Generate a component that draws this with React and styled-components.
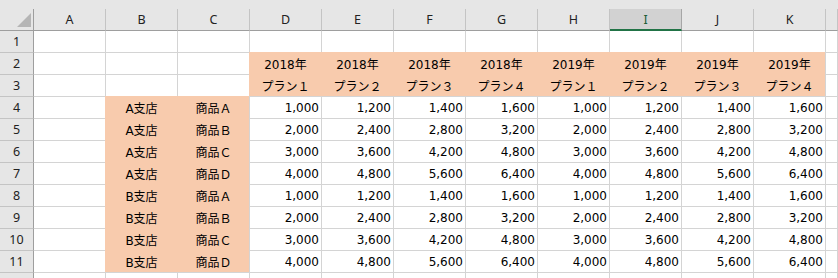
import React from "react";
import styled, { createGlobalStyle } from "styled-components";

const COLS = ["A", "B", "C", "D", "E", "F", "G", "H", "I", "J", "K", ""];
const SELECTED = "I";
const ROWS = 12;
const VISIBLE_ROWS = 11;

const plans = [
  ...[1, 2, 3, 4].map((p) => ({ year: "2018年", plan: "プラン" + String.fromCharCode(0xff10 + p), p })),
  ...[1, 2, 3, 4].map((p) => ({ year: "2019年", plan: "プラン" + String.fromCharCode(0xff10 + p), p })),
];

const items = [];
["A支店", "B支店"].forEach((shop) => {
  ["Ａ", "Ｂ", "Ｃ", "Ｄ"].forEach((name, i) => {
    items.push({ shop, product: "商品" + name, k: i + 1 });
  });
});

const fmt = (n) => n.toLocaleString("en-US");

// row -> cells for columns A..K
const buildRow = (r) => {
  const cells = Array(11).fill(null);
  if (r === 2 || r === 3) {
    plans.forEach((pl, i) => {
      cells[3 + i] = { text: r === 2 ? pl.year : pl.plan, fill: true, align: "center" };
    });
  }
  if (r >= 4 && r <= 11) {
    const it = items[r - 4];
    cells[1] = { text: it.shop, fill: true, align: "center" };
    cells[2] = { text: it.product, fill: true, align: "center" };
    plans.forEach((pl, i) => {
      cells[3 + i] = { text: fmt(it.k * (1000 + 200 * (pl.p - 1))), align: "right" };
    });
  }
  return cells;
};

const App = () => {
  return (
    <>
      <GlobalStyle />
      <Sheet>
        <TopStrip />
        <Grid>
          <Corner>
            <CornerMark />
          </Corner>
          {COLS.map((c, i) => (
            <ColHeader key={"h" + i} $selected={c === SELECTED}>
              {c}
            </ColHeader>
          ))}
          {Array.from({ length: ROWS }, (_, idx) => {
            const r = idx + 1;
            const cells = buildRow(r);
            return (
              <React.Fragment key={r}>
                <RowHeader>{r <= VISIBLE_ROWS ? r : ""}</RowHeader>
                {cells.map((cell, ci) => (
                  <Cell
                    key={ci}
                    $fill={cell && cell.fill}
                    $align={cell ? cell.align : "left"}
                  >
                    {cell ? cell.text : ""}
                  </Cell>
                ))}
                <Cell />
              </React.Fragment>
            );
          })}
        </Grid>
      </Sheet>
    </>
  );
};

const GlobalStyle = createGlobalStyle`
  html, body {
    margin: 0;
    padding: 0;
    background: #ffffff;
    overflow: hidden;
  }
  body {
    font-family: "DejaVu Sans", "Noto Sans CJK JP", sans-serif;
  }
`;

const Sheet = styled.div`
  width: 838px;
  height: 278px;
  overflow: hidden;
  background: #ffffff;
`;

const TopStrip = styled.div`
  height: 9px;
  background: #e6e6e6;
`;

const Grid = styled.div`
  display: grid;
  grid-template-columns: 34px repeat(11, 72px) 1fr;
  grid-auto-rows: 22px;
`;

const Corner = styled.div`
  box-sizing: border-box;
  background: #e6e6e6;
  border-right: 1px solid #9e9e9e;
  border-bottom: 1px solid #9e9e9e;
  display: flex;
  align-items: flex-end;
  justify-content: flex-end;
  padding: 0 2px 3px 0;
`;

const CornerMark = styled.div`
  width: 14px;
  height: 14px;
  background: #b5b5b5;
  clip-path: polygon(100% 0, 100% 100%, 0 100%);
`;

const ColHeader = styled.div`
  box-sizing: border-box;
  background: ${({ $selected }) => ($selected ? "#d2d2d2" : "#e6e6e6")};
  border-right: 1px solid ${({ $selected }) => ($selected ? "#a6a6a6" : "#c4c4c4")};
  border-bottom: ${({ $selected }) => ($selected ? "2px solid #217346" : "1px solid #9e9e9e")};
  color: ${({ $selected }) => ($selected ? "#1d5c38" : "#222222")};
  font-family: "Noto Sans", "DejaVu Sans", sans-serif;
  font-size: 12.5px;
  display: flex;
  align-items: center;
  justify-content: center;
  padding-top: ${({ $selected }) => ($selected ? "1px" : "0")};
`;

const RowHeader = styled.div`
  box-sizing: border-box;
  background: #e6e6e6;
  border-right: 1px solid #9e9e9e;
  border-bottom: 1px solid #c4c4c4;
  color: #222222;
  font-family: "Noto Sans", "DejaVu Sans", sans-serif;
  font-size: 12.5px;
  display: flex;
  align-items: center;
  justify-content: center;
`;

const Cell = styled.div`
  box-sizing: border-box;
  border-right: 1px solid #d4d4d4;
  border-bottom: 1px solid #d4d4d4;
  background: ${({ $fill }) => ($fill ? "#f8cbad" : "transparent")};
  box-shadow: ${({ $fill }) => ($fill ? "-1px -1px 0 0 #f8cbad" : "none")};
  color: #000000;
  font-family: "DejaVu Sans", "Noto Sans CJK JP", sans-serif;
  font-size: 12px;
  white-space: nowrap;
  overflow: visible;
  display: flex;
  align-items: center;
  justify-content: ${({ $align }) =>
    $align === "center" ? "center" : $align === "right" ? "flex-end" : "flex-start"};
  padding: 0 2px 0 2px;
`;

export default App;
